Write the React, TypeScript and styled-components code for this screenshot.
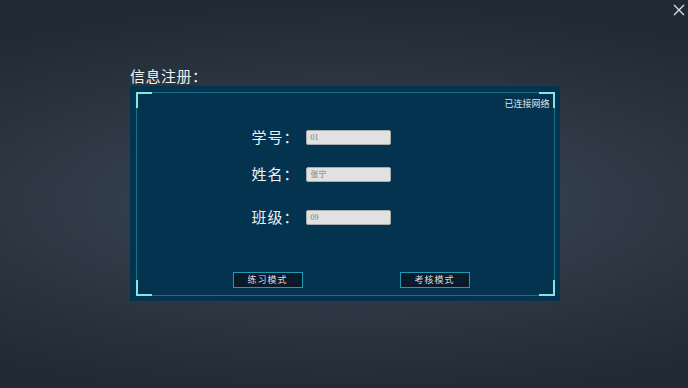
import styled, { createGlobalStyle } from "styled-components";

const GlobalStyle = createGlobalStyle`
  html, body {
    margin: 0;
    padding: 0;
    width: 100%;
    height: 100%;
  }
  body {
    font-family: "Noto Sans CJK SC", "Noto Sans", sans-serif;
    overflow: hidden;
  }
`;

const fields = [
  { label: "学号：", value: "01", gap: 19 },
  { label: "姓名：", value: "张宁", gap: 21 },
  { label: "班级：", value: "09", gap: 27 },
];

const App = () => {
  return (
    <Screen>
      <GlobalStyle />
      <TopBar>
        <CloseButton aria-label="close">
          <svg width="12" height="12" viewBox="0 0 12 12">
            <path d="M1 1 L11 11 M11 1 L1 11" stroke="#d8dde2" strokeWidth="1.4" />
          </svg>
        </CloseButton>
      </TopBar>
      <Content>
        <Title>信息注册：</Title>
        <Panel>
          <Frame>
            <Status>已连接网络</Status>
            <Form>
              {fields.map((f) => (
                <Row key={f.label} $gap={f.gap}>
                  <Label>{f.label}</Label>
                  <Input>{f.value}</Input>
                </Row>
              ))}
            </Form>
            <Buttons>
              <ModeButton>练习模式</ModeButton>
              <ModeButton>考核模式</ModeButton>
            </Buttons>
            <Corner $pos="tl" />
            <Corner $pos="tr" />
            <Corner $pos="bl" />
            <Corner $pos="br" />
          </Frame>
        </Panel>
      </Content>
    </Screen>
  );
};

export default App;

const Screen = styled.main`
  width: 688px;
  height: 388px;
  display: flex;
  flex-direction: column;
  background: radial-gradient(
    ellipse 85% 50% at 50% 52%,
    #3c4855 0%,
    #303b47 45%,
    #212a35 100%
  );
`;

const TopBar = styled.div`
  display: flex;
  justify-content: flex-end;
  padding: 3px 2px 0 0;
  height: 15px;
`;

const CloseButton = styled.button`
  width: 14px;
  height: 14px;
  padding: 0;
  border: none;
  background: transparent;
  display: flex;
  align-items: center;
  justify-content: center;
  cursor: pointer;
`;

const Content = styled.div`
  display: flex;
  flex-direction: column;
  align-items: center;
  margin-top: 48px;
`;

const Title = styled.h1`
  align-self: flex-start;
  margin: 0 0 0 130px;
  font-size: 15px;
  line-height: 20px;
  font-weight: 400;
  color: #eef1f4;
  letter-spacing: 0.5px;
`;

const Panel = styled.section`
  width: 430px;
  height: 215px;
  box-sizing: border-box;
  padding: 6px 5px 5px 6px;
  background: #043350;
  margin-left: 1px;
`;

const Frame = styled.div`
  position: relative;
  height: 100%;
  box-sizing: border-box;
  border: 1px solid #1d6f86;
  display: flex;
  flex-direction: column;
`;

const Corner = styled.span<{ $pos: "tl" | "tr" | "bl" | "br" }>`
  position: absolute;
  width: 14px;
  height: 14px;
  border-color: #86e4e4;
  border-style: solid;
  border-width: 0;
  ${({ $pos }) => ($pos[0] === "t" ? "top: -1px;" : "bottom: -1px;")}
  ${({ $pos }) => ($pos[1] === "l" ? "left: -1px;" : "right: -1px;")}
  ${({ $pos }) => ($pos[0] === "t" ? "border-top-width: 2px;" : "border-bottom-width: 2px;")}
  ${({ $pos }) => ($pos[1] === "l" ? "border-left-width: 2px;" : "border-right-width: 2px;")}
`;

const Status = styled.div`
  align-self: flex-end;
  margin: 5px 4px 0 0;
  font-size: 9px;
  line-height: 12px;
  color: #dfe6ea;
`;

const Form = styled.div`
  display: flex;
  flex-direction: column;
  padding-left: 115px;
`;

const Row = styled.div<{ $gap: number }>`
  display: flex;
  align-items: center;
  margin-top: ${({ $gap }) => $gap}px;
  height: 16px;
`;

const Label = styled.span`
  width: 54px;
  font-size: 15px;
  line-height: 16px;
  color: #eef1f4;
  letter-spacing: 1px;
`;

const Input = styled.div`
  width: 85px;
  height: 15px;
  box-sizing: border-box;
  background: #e1e1e1;
  border: 1px solid #a9adb0;
  border-radius: 2px;
  padding-left: 4px;
  font-family: "Liberation Serif", "Noto Sans CJK SC", serif;
  font-size: 8px;
  line-height: 13px;
  color: #7a7a7a;
`;

const Buttons = styled.div`
  display: flex;
  gap: 97px;
  padding-left: 96px;
  margin-top: 47px;
`;

const ModeButton = styled.button`
  width: 70px;
  height: 16px;
  box-sizing: border-box;
  padding: 0;
  background: #0b1a2a;
  border: 1px solid #1c9bb2;
  color: #d6dbe0;
  font-family: "Noto Sans CJK SC", sans-serif;
  font-size: 9px;
  line-height: 14px;
  letter-spacing: 1px;
  cursor: pointer;
`;
